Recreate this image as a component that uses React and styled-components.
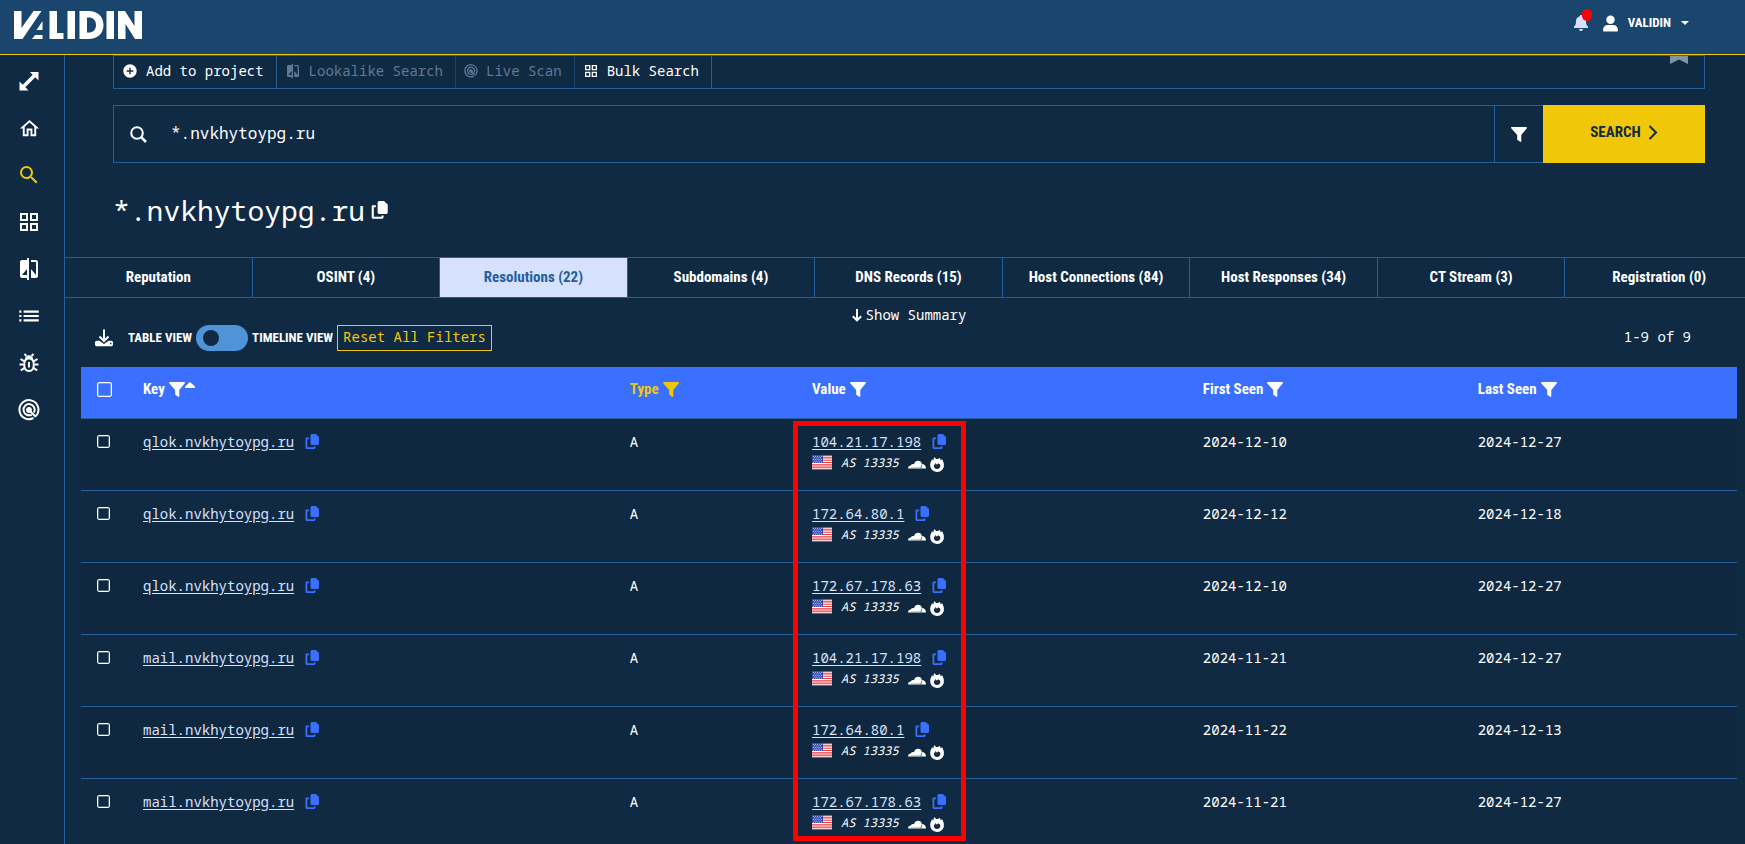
import React from "react";
import styled, { createGlobalStyle, css } from "styled-components";
import {
  MdOutlineHome,
  MdSearch,
  MdOutlineGridView,
  MdCompare,
  MdList,
  MdAddCircle,
} from "react-icons/md";

const colors = {
  page: "#102a43",
  row: "#0f283f",
  header: "#1a466e",
  line: "#255f99",
  yellow: "#f0c808",
  blue: "#3a6fff",
  pale: "#d6e0ff",
  toggle: "#4f94d6",
};

const mono = `"Noto Sans Mono", "DejaVu Sans Mono", monospace`;
const narrow = `"Liberation Sans Narrow", "Roboto Condensed", Roboto, sans-serif`;

const GlobalStyle = createGlobalStyle`
  *, *::before, *::after {
    box-sizing: border-box;
  }
  body {
    margin: 0;
    background: ${colors.page};
    color: white;
    font-family: ${mono};
    font-size: 14px;
    line-height: 20px;
    overflow: hidden;
  }
  button, input {
    font: inherit;
    color: inherit;
    background: none;
    border: none;
    border-radius: 0;
    padding: 0;
    margin: 0;
  }
  button {
    cursor: pointer;
  }
  svg {
    display: block;
    flex: none;
  }
`;

const Page = styled.div`
  display: flex;
  flex-direction: column;
  height: 100vh;
  overflow: hidden;
`;

const Header = styled.header`
  display: flex;
  flex: none;
  align-items: flex-start;
  justify-content: space-between;
  height: 55px;
  padding: 11px 56px 0 14px;
  background: ${colors.header};
  border-bottom: 1px solid ${colors.yellow};
`;

const UserMenu = styled.div`
  display: flex;
  align-items: center;
  gap: 15px;
  height: 24px;
`;

const BellButton = styled.button`
  position: relative;
  color: ${colors.pale};
`;

const Badge = styled.span`
  position: absolute;
  top: -6px;
  right: -4px;
  width: 10px;
  height: 12px;
  border-radius: 5px;
  background: red;
`;

const UserButton = styled.button`
  display: flex;
  align-items: center;
  gap: 10px;
  font-family: ${narrow};
  font-weight: 700;
  font-size: 13px;
`;

const Body = styled.div`
  display: flex;
  flex: 1;
  min-height: 0;
`;

const Sidebar = styled.nav`
  display: flex;
  flex: none;
  flex-direction: column;
  align-items: center;
  gap: 23px;
  width: 65px;
  padding: 14px 6px 0 0;
  border-right: 1px solid ${colors.line};
`;

const SideLink = styled.a`
  display: flex;
  align-items: center;
  justify-content: center;
  width: 24px;
  height: 24px;
  color: ${({ $active }) => ($active ? colors.yellow : "white")};
`;

const Main = styled.main`
  flex: 1;
  min-width: 0;
  overflow: hidden;
`;

const Top = styled.section`
  padding: 0 40px 0 48px;
`;

const ActionBar = styled.div`
  display: flex;
  align-items: stretch;
  justify-content: space-between;
  height: 34px;
  border: 1px solid ${colors.line};
`;

const Actions = styled.div`
  display: flex;
`;

const Action = styled.button`
  display: flex;
  align-items: center;
  gap: 8px;
  padding: 0 12px 2px 8px;
  border-right: 1px solid ${colors.line};
  &:disabled {
    color: #627894;
    border-color: #1a466e;
    cursor: default;
  }
`;

const Bookmark = styled.button`
  align-self: flex-start;
  margin-right: 16px;
  color: #8494a2;
`;

const SearchRow = styled.form`
  display: flex;
  height: 58px;
  margin-top: 16px;
`;

const SearchField = styled.label`
  display: flex;
  flex: 1;
  align-items: center;
  gap: 24px;
  padding-left: 16px;
  border: 1px solid ${colors.line};
`;

const SearchInput = styled.input`
  flex: 1;
  padding-bottom: 2px;
  font-size: 16px;
  line-height: 24px;
  outline: none;
`;

const FilterButton = styled.button`
  display: flex;
  align-items: center;
  justify-content: center;
  width: 48px;
  border: solid ${colors.line};
  border-width: 1px 0;
`;

const SearchButton = styled.button`
  display: flex;
  align-items: center;
  justify-content: center;
  gap: 7px;
  width: 162px;
  padding-bottom: 4px;
  background: ${colors.yellow};
  color: ${colors.page};
  font-family: ${narrow};
  font-weight: 700;
  font-size: 15px;
`;

const Title = styled.h1`
  display: flex;
  align-items: center;
  gap: 6px;
  margin: 27px 0;
  font-size: 28px;
  font-weight: 400;
  line-height: 40px;
`;

const CopyButton = styled.button`
  display: inline-flex;
  color: ${({ $light }) => ($light ? "white" : colors.blue)};
`;

const TabSection = styled.section`
  margin-right: -8px;
`;

const Tabs = styled.nav`
  display: grid;
  grid-template-columns: repeat(9, 1fr);
  border: solid ${colors.line};
  border-width: 1px 0;
`;

const Tab = styled.button`
  height: 39px;
  padding-bottom: 2px;
  font-family: ${narrow};
  font-weight: 700;
  font-size: 15px;
  border-right: 1px solid ${colors.line};
  &:last-child {
    border-right: none;
  }
  ${({ $active }) =>
    $active &&
    css`
      background: ${colors.pale};
      color: ${colors.line};
    `}
`;

const SummaryButton = styled.button`
  display: flex;
  align-items: center;
  gap: 4px;
  margin: 7px auto 0;
`;

const Toolbar = styled.div`
  display: flex;
  align-items: center;
  gap: 4px;
  height: 26px;
  padding: 0 54px 0 30px;
  font-family: ${narrow};
  font-weight: 700;
  font-size: 13px;
`;

const DownloadButton = styled.button`
  margin-right: 11px;
`;

const Switch = styled.input`
  appearance: none;
  display: flex;
  align-items: center;
  width: 52px;
  height: 26px;
  padding-left: 7px;
  border-radius: 13px;
  background: ${colors.toggle};
  &::before {
    content: "";
    width: 16px;
    height: 16px;
    border-radius: 8px;
    background: ${colors.page};
  }
  &:checked {
    padding-left: 29px;
  }
`;

const ResetButton = styled.button`
  height: 26px;
  padding: 0 5px 2px;
  border: 1px solid ${colors.yellow};
  color: ${colors.yellow};
  font-family: ${mono};
  font-weight: 400;
  font-size: 14px;
`;

const Count = styled.span`
  margin-left: auto;
  padding-bottom: 2px;
  font-family: ${mono};
  font-weight: 400;
  font-size: 14px;
`;

const TableWrap = styled.div`
  position: relative;
  margin: 16px 8px 0 16px;
`;

const Table = styled.table`
  width: 100%;
  table-layout: fixed;
  border-collapse: collapse;
  text-align: left;
`;

const Th = styled.th`
  width: ${({ $width }) => $width};
  height: 51px;
  padding: 0 12px 6px;
  background: ${colors.blue};
  border-bottom: 1px solid ${colors.line};
  color: ${({ $active }) => ($active ? colors.yellow : "white")};
  font-family: ${narrow};
  font-weight: 700;
  font-size: 15px;
`;

const HeadLabel = styled.div`
  display: flex;
  align-items: center;
  gap: 4px;
`;

const SortMark = styled.svg`
  align-self: flex-start;
  margin: 3px 0 0 -4px;
`;

const Tr = styled.tr`
  height: 72px;
  border-bottom: 1px solid ${colors.line};
  &:nth-child(odd) {
    background: ${colors.row};
  }
`;

const Td = styled.td`
  padding: 13px 12px 0;
  vertical-align: top;
`;

const Checkbox = styled.input`
  appearance: none;
  display: block;
  width: ${({ $size }) => $size};
  height: ${({ $size }) => $size};
  margin: ${({ $margin }) => $margin};
  border: 1px solid white;
  border-radius: 2px;
  box-shadow: inset 0 0 0 1px rgba(255, 255, 255, 0.3);
`;

const Entry = styled.div`
  display: flex;
  align-items: center;
  gap: 11px;
`;

const EntryLink = styled.a`
  color: ${colors.pale};
  text-decoration: underline;
  text-underline-offset: 2px;
`;

const Network = styled.div`
  display: flex;
  align-items: center;
  gap: 4px;
  margin-top: 1px;
  font-size: 12px;
  font-style: italic;
`;

const NetworkName = styled.span`
  padding: 0 5px;
`;

const NetworkTags = styled.span`
  display: flex;
  align-items: center;
  gap: 4px;
  padding-top: 4px;
`;

const Highlight = styled.div`
  position: absolute;
  top: 54px;
  left: 43%;
  width: 173px;
  height: 420px;
  border: 5px solid red;
  pointer-events: none;
`;

function Logo() {
  return (
    <svg width="128" height="28" viewBox="0 0 128 28" fill="white" role="img" aria-label="Validin">
      <path d="M0 0h7.500v17L19.500 0h8L8.500 28H0z" />
      <path d="M28.500 10v9h-6zM21 24h7.500v4h-10.500z" />
      <path d="M35.500 0h7.500v22h6.500v6h-14zM53.500 0h7.500v28h-7.500z" />
      <path fillRule="evenodd" d="M65.500 0h9c9 0 15 5.500 15 14s-6 14-15 14h-9zM73 6.500v15h1.500c4.500 0 7.500-2.500 7.500-7.500s-3-7.500-7.500-7.500z" />
      <path d="M92.500 0h7.500v28h-7.500zM104 0h7l9.500 15V0h7.500v28h-7L111.500 13v15H104z" />
    </svg>
  );
}

function ExpandIcon() {
  return (
    <svg width="20" height="20" viewBox="0 0 20 20" fill="white">
      <path d="M11 1h8.500v8.500l-3.200-3.200-10 10L9.500 19.500H.5v-9l3.200 3.200 10-10z" />
    </svg>
  );
}

function BugIcon() {
  return (
    <svg width="20" height="20" viewBox="0 0 20 20" fill="none" stroke="currentColor" strokeWidth="2">
      <path d="M10 5.500c3 0 4.800 2 4.800 6s-1.800 6.500-4.800 6.500-4.800-2.500-4.800-6.500 1.800-6 4.800-6z" />
      <path d="M6.500 5.500c.3-1.800 1.700-2.700 3.500-2.700s3.200.9 3.500 2.700z" fill="currentColor" strokeWidth="1" />
      <path d="M5.500 1l2 2M14.500 1l-2 2M.5 11.500h4M15.500 11.500h4M1.500 6l4 2.300M18.500 6l-4 2.300M1.800 17.300l3.900-2.400M18.200 17.300l-3.900-2.400M10 9v5.500" />
    </svg>
  );
}

function TargetIcon({ size }) {
  return (
    <svg width={size} height={size} viewBox="0 0 22 22" fill="none" stroke="currentColor" strokeWidth="2">
      <path d="M15.500 19a9.500 9.500 0 1 1 2.700-2.200" />
      <path d="M13.800 15.600a5.600 5.600 0 1 1 2.200-2.200" />
      <circle cx="11" cy="11" r="1.900" fill="currentColor" />
      <path d="M11 11l7 7" />
    </svg>
  );
}

function Funnel({ size = 16 }) {
  return (
    <svg width={size} height="15" viewBox="0 0 16 15" fill="currentColor">
      <path d="M.8 0h14.400c.7 0 1 .8.600 1.300L10.300 8v6.200c0 .6-.6.9-1.100.6L6.600 13a1 1 0 0 1-.4-.7V8L.2 1.300C-.2.800.1 0 .8 0z" />
    </svg>
  );
}

function CopyIcon({ size = 15 }) {
  return (
    <svg width={size} height={size + 1} viewBox="0 0 15 16" fill="currentColor">
      <path d="M7 0h3.800L14 3v6.500c0 .8-.6 1.500-1.400 1.500H7c-.8 0-1.500-.7-1.500-1.500v-8C5.500.700 6.200 0 7 0z" />
      <path d="M4 3.500H1.500C.9 3.500.5 4 .5 4.500v9c0 .8.600 1.500 1.400 1.500h7.200c.8 0 1.400-.6 1.400-1.500V12.300H8.800v1H2.300v-8H4z" />
    </svg>
  );
}

function DownloadIcon() {
  return (
    <svg width="18" height="18" viewBox="0 0 18 18" fill="none" stroke="white" strokeWidth="2">
      <path d="M9 .5v11M4.500 7.500L9 12l4.500-4.500" />
      <path
        fill="white"
        stroke="none"
        fillRule="evenodd"
        d="M1.800 11.800h2.700L9 15l4.500-3.200h2.700c1 0 1.800.8 1.800 1.800v1.800c0 1-.8 1.800-1.800 1.800H1.800c-1 0-1.800-.8-1.800-1.800v-1.800c0-1 .8-1.800 1.800-1.800zM15 13.800v1.400h1.400v-1.400z"
      />
    </svg>
  );
}

function Flag() {
  return (
    <svg width="20" height="15" viewBox="0 0 20 15" role="img" aria-label="US">
      <path fill="#fff" d="M0 0h20v15H0z" />
      <path
        stroke="#e8383d"
        strokeWidth="1.150"
        d="M0 .6h20M0 2.900h20M0 5.200h20M0 7.500h20M0 9.800h20M0 12.100h20M0 14.400h20"
      />
      <path fill="#3c4fae" d="M0 0h11v8H0z" />
      <path stroke="#cdd5f5" strokeDasharray="1 1" d="M1 1.500h9M2 3h8M1 4.500h9M2 6h8M1 7.200h9" strokeWidth=".7" />
    </svg>
  );
}

function CloudIcon() {
  return (
    <svg width="18" height="9" viewBox="0 0 18 9">
      <path fill="#fff" d="M0 8.500c0-1.700 1.200-2.900 2.900-2.900C3 4.200 4.600 3.400 5.800 4.200 6.800 1.600 8.500.5 10.300.7c2 .2 3.400 1.500 3.700 3.300 2.300 0 4 1.800 4 4.500z" />
      <path stroke="#c4c8cc" d="M3 7.300h9.800" />
      <path stroke="#102a43" strokeWidth=".6" d="M12.800 8.500l1-4" />
    </svg>
  );
}

function FlameIcon() {
  return (
    <svg width="14" height="15" viewBox="0 0 14 15">
      <path fill="#fff" d="M4.700 0c.3 1 .8 1.700 1.600 2.100C8 2.300 8.900 1.700 9.300.7c.8.700 1.200 1.500 1.300 2.500.7-.2 1.100-.6 1.300-1.200 1.300 1.800 2 4.100 2 6.200 0 3.800-2.900 6.700-6.800 6.700C3.100 14.900.2 12 .2 8.300c0-2.400.8-4.500 2.100-6.300.1.700.4 1.200.9 1.500C3.300 2.200 3.800 1 4.700 0z" />
      <path fill="#102a43" d="M5.800 5.500c-.1 1 .4 1.700 1.200 2 .6-.2 1-.7 1-1.200 1.500.5 2.300 1.500 2.300 2.700 0 1.800-1.400 3.100-3.200 3.100S3.900 10.800 3.900 9c0-.8.3-1.500.7-2 .2.500.4.700.7.800-.1-.9.100-1.700.5-2.300z" />
    </svg>
  );
}

const sideItems = [
  { label: "Expand", icon: <ExpandIcon /> },
  { label: "Home", icon: <MdOutlineHome size={23} /> },
  { label: "Search", icon: <MdSearch size={24} />, active: true },
  { label: "Projects", icon: <MdOutlineGridView size={24} /> },
  { label: "Compare", icon: <MdCompare size={24} /> },
  { label: "Lists", icon: <MdList size={26} /> },
  { label: "Threats", icon: <BugIcon /> },
  { label: "Scan", icon: <TargetIcon size={22} /> },
];

const tabs = [
  "Reputation",
  "OSINT (4)",
  "Resolutions (22)",
  "Subdomains (4)",
  "DNS Records (15)",
  "Host Connections (84)",
  "Host Responses (34)",
  "CT Stream (3)",
  "Registration (0)",
];

const columns = [
  { label: "Key", width: "29.4%", sorted: true },
  { label: "Type", width: "11%", active: true },
  { label: "Value", width: "23.6%" },
  { label: "First Seen", width: "16.6%" },
  { label: "Last Seen", width: "auto" },
];

const records = [
  ["qlok.nvkhytoypg.ru", "104.21.17.198", "2024-12-10", "2024-12-27"],
  ["qlok.nvkhytoypg.ru", "172.64.80.1", "2024-12-12", "2024-12-18"],
  ["qlok.nvkhytoypg.ru", "172.67.178.63", "2024-12-10", "2024-12-27"],
  ["mail.nvkhytoypg.ru", "104.21.17.198", "2024-11-21", "2024-12-27"],
  ["mail.nvkhytoypg.ru", "172.64.80.1", "2024-11-22", "2024-12-13"],
  ["mail.nvkhytoypg.ru", "172.67.178.63", "2024-11-21", "2024-12-27"],
];

function CopyEntry({ text }) {
  return (
    <Entry>
      <EntryLink href="#">{text}</EntryLink>
      <CopyButton aria-label={`Copy ${text}`}>
        <CopyIcon />
      </CopyButton>
    </Entry>
  );
}

function Navbar() {
  return (
    <Header>
      <Logo />
      <UserMenu>
        <BellButton aria-label="Notifications">
          <svg width="14" height="16" viewBox="0 0 14 16" fill="currentColor">
            <path d="M7 0c.7 0 1.100.5 1.100 1.200C10.500 1.800 12 3.600 12 6c0 3.500.7 4.600 2 5.500V13H0v-1.500C1.300 10.600 2 9.500 2 6c0-2.400 1.500-4.200 3.900-4.800C5.900.500 6.300 0 7 0zM5 14h4c0 1.200-.8 2-2 2s-2-.8-2-2z" />
          </svg>
          <Badge />
        </BellButton>
        <UserButton>
          <svg width="15" height="17" viewBox="0 0 16 17" fill="currentColor">
            <circle cx="8" cy="4.500" r="4.500" />
            <path d="M1 17c-.6 0-1-.4-1-1 0-4 2-6 5-6h6c3 0 5 2 5 6 0 .6-.4 1-1 1z" />
          </svg>
          VALIDIN
          <svg width="8" height="4" viewBox="0 0 8 4" fill="currentColor">
            <path d="M0 0h8L4 4z" />
          </svg>
        </UserButton>
      </UserMenu>
    </Header>
  );
}

function ResultsTable() {
  return (
    <TableWrap>
      <Table>
        <thead>
          <tr>
            <Th $width="50px">
              <Checkbox type="checkbox" aria-label="Select all" $size="15px" $margin="0 0 0 4px" />
            </Th>
            {columns.map(({ label, width, sorted, active }) => (
              <Th key={label} $width={width} $active={active}>
                <HeadLabel>
                  {label}
                  <Funnel />
                  {sorted && (
                    <SortMark width="10" height="6" viewBox="0 0 10 6" fill="currentColor">
                      <path d="M5 0l5 4.500V6H0V4.500z" />
                    </SortMark>
                  )}
                </HeadLabel>
              </Th>
            ))}
          </tr>
        </thead>
        <tbody>
          {records.map(([key, value, first, last], i) => (
            <Tr key={i}>
              <Td>
                <Checkbox type="checkbox" aria-label={`Select ${key} ${value}`} $size="13px" $margin="3px 0 0 4px" />
              </Td>
              <Td>
                <CopyEntry text={key} />
              </Td>
              <Td>A</Td>
              <Td>
                <CopyEntry text={value} />
                <Network>
                  <Flag />
                  <NetworkName>AS 13335</NetworkName>
                  <NetworkTags>
                    <CloudIcon />
                    <FlameIcon />
                  </NetworkTags>
                </Network>
              </Td>
              <Td>{first}</Td>
              <Td>{last}</Td>
            </Tr>
          ))}
        </tbody>
      </Table>
      <Highlight />
    </TableWrap>
  );
}

export default function App() {
  const [query, setQuery] = React.useState("*.nvkhytoypg.ru");
  const [timeline, setTimeline] = React.useState(false);

  return (
    <Page>
      <GlobalStyle />
      <Navbar />
      <Body>
        <Sidebar>
          {sideItems.map(({ label, icon, active }) => (
            <SideLink key={label} href="#" aria-label={label} $active={active}>
              {icon}
            </SideLink>
          ))}
        </Sidebar>
        <Main>
          <Top>
            <ActionBar>
              <Actions>
                <Action>
                  <MdAddCircle size={16} />
                  Add to project
                </Action>
                <Action disabled>
                  <MdCompare size={16} />
                  Lookalike Search
                </Action>
                <Action disabled>
                  <TargetIcon size={14} />
                  Live Scan
                </Action>
                <Action>
                  <MdOutlineGridView size={16} />
                  Bulk Search
                </Action>
              </Actions>
              <Bookmark aria-label="Bookmark">
                <svg width="18" height="8" viewBox="0 0 18 8" fill="currentColor">
                  <path d="M0 0h18v8L9 3.500 0 8z" />
                </svg>
              </Bookmark>
            </ActionBar>
            <SearchRow onSubmit={(e) => e.preventDefault()}>
              <SearchField>
                <svg width="17" height="17" viewBox="0 0 17 17" fill="none" stroke="white" strokeWidth="2">
                  <circle cx="7" cy="7" r="5.800" />
                  <path d="M11 11l5 5" strokeWidth="2.500" />
                </svg>
                <SearchInput
                  aria-label="Search"
                  value={query}
                  onChange={(e) => setQuery(e.target.value)}
                />
              </SearchField>
              <FilterButton type="button" aria-label="Search filters">
                <Funnel />
              </FilterButton>
              <SearchButton type="submit">
                SEARCH
                <svg width="10" height="15" viewBox="0 0 10 15" fill="none" stroke="currentColor" strokeWidth="2">
                  <path d="M1.500 1l6.500 6.500L1.500 14" />
                </svg>
              </SearchButton>
            </SearchRow>
            <Title>
              *.nvkhytoypg.ru
              <CopyButton aria-label="Copy domain" $light>
                <CopyIcon size={18} />
              </CopyButton>
            </Title>
          </Top>
          <TabSection>
            <Tabs>
              {tabs.map((tab) => (
                <Tab key={tab} $active={tab.startsWith("Resolutions")}>
                  {tab}
                </Tab>
              ))}
            </Tabs>
            <SummaryButton>
              <svg width="10" height="13" viewBox="0 0 10 13" fill="none" stroke="white" strokeWidth="2">
                <path d="M5 0v11M.8 7.200L5 11.400l4.200-4.200" />
              </svg>
              Show Summary
            </SummaryButton>
          </TabSection>
          <Toolbar>
            <DownloadButton aria-label="Download">
              <DownloadIcon />
            </DownloadButton>
            <span>TABLE VIEW</span>
            <Switch
              id="view"
              type="checkbox"
              role="switch"
              checked={timeline}
              onChange={(e) => setTimeline(e.target.checked)}
            />
            <label htmlFor="view">TIMELINE VIEW</label>
            <ResetButton>Reset All Filters</ResetButton>
            <Count>1-9 of 9</Count>
          </Toolbar>
          <ResultsTable />
        </Main>
      </Body>
    </Page>
  );
}
